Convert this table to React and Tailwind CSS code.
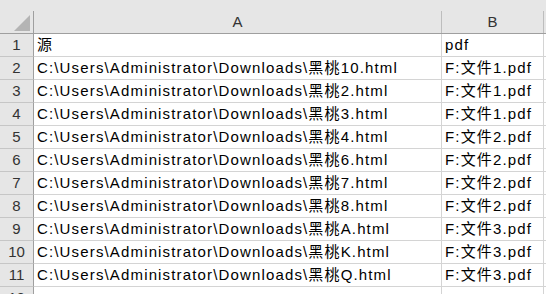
import React from 'react'

const rows = [
  ['源', 'pdf'],
  ['C:\\Users\\Administrator\\Downloads\\黑桃10.html', 'F:文件1.pdf'],
  ['C:\\Users\\Administrator\\Downloads\\黑桃2.html', 'F:文件1.pdf'],
  ['C:\\Users\\Administrator\\Downloads\\黑桃3.html', 'F:文件1.pdf'],
  ['C:\\Users\\Administrator\\Downloads\\黑桃4.html', 'F:文件2.pdf'],
  ['C:\\Users\\Administrator\\Downloads\\黑桃6.html', 'F:文件2.pdf'],
  ['C:\\Users\\Administrator\\Downloads\\黑桃7.html', 'F:文件2.pdf'],
  ['C:\\Users\\Administrator\\Downloads\\黑桃8.html', 'F:文件2.pdf'],
  ['C:\\Users\\Administrator\\Downloads\\黑桃A.html', 'F:文件3.pdf'],
  ['C:\\Users\\Administrator\\Downloads\\黑桃K.html', 'F:文件3.pdf'],
  ['C:\\Users\\Administrator\\Downloads\\黑桃Q.html', 'F:文件3.pdf'],
  ['', ''],
]

function Row({ n, a, b }) {
  return (
    <div className="flex h-[23px] shrink-0">
      <div className="w-[34px] shrink-0 flex items-end justify-center pb-[1px] bg-[#e6e6e6] border-r border-b border-r-[#9f9f9f] border-b-[#c6c6c6] text-[#333] tracking-normal">
        {n}
      </div>
      <div className="w-[408px] shrink-0 flex items-end pl-[3px] pb-[1px] border-r border-b border-[#d4d4d4] whitespace-nowrap overflow-hidden">
        {a}
      </div>
      <div className="w-[102px] shrink-0 flex items-end pl-[3px] pb-[1px] border-r border-b border-[#d4d4d4] whitespace-nowrap overflow-hidden">
        {b}
      </div>
      <div className="flex-1 border-b border-[#d4d4d4]" />
    </div>
  )
}

export default function App() {
  return (
    <div
      className="w-[546px] h-[294px] overflow-hidden bg-white flex flex-col text-[15px] leading-[20px] text-black tracking-[1.15px]"
      style={{ fontFamily: '"Liberation Sans", "Noto Sans CJK SC", sans-serif' }}
    >
      {/* column headers */}
      <div className="flex h-[34px] shrink-0 pt-[11px] bg-[#e6e6e6] border-b border-[#9f9f9f] text-[#333] tracking-normal">
        <div className="w-[34px] shrink-0 flex items-end justify-end pr-[3px] pb-[2px] border-r border-[#9f9f9f]">
          <svg width="16" height="16" viewBox="0 0 16 16">
            <polygon points="16,0 16,16 0,16" fill="#b4b4b4" />
          </svg>
        </div>
        <div className="w-[408px] shrink-0 flex items-center justify-center border-r border-[#bdbdbd]">A</div>
        <div className="w-[102px] shrink-0 flex items-center justify-center border-r border-[#bdbdbd]">B</div>
        <div className="flex-1" />
      </div>
      {rows.map((r, i) => (
        <Row key={i} n={i + 1} a={r[0]} b={r[1]} />
      ))}
    </div>
  )
}
